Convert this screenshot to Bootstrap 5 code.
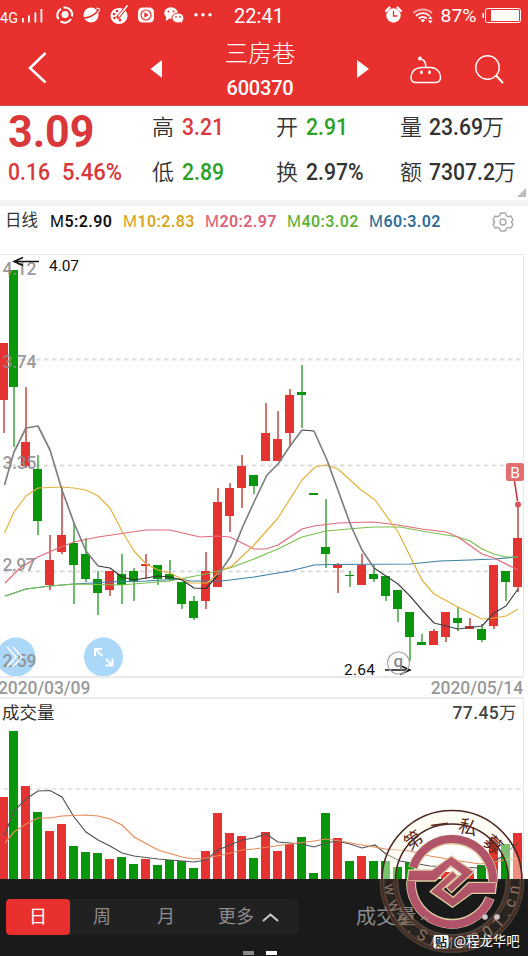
<!DOCTYPE html>
<html lang="zh-CN">
<head>
<meta charset="utf-8">
<meta name="viewport" content="width=device-width, initial-scale=1">
<title>三房巷 600370</title>
<link href="https://cdn.jsdelivr.net/npm/bootstrap@5.3.0/dist/css/bootstrap.min.css" rel="stylesheet">
<style>
body{font-family:Roboto,"Noto Sans CJK SC",sans-serif;line-height:1;background:#fff}
.phone{width:528px;height:956px}
svg{display:block;flex:none}
.brand-bg{background:#e8312f}
.status{height:31px}
.appbar{height:74px}
.title-box{width:100px;padding-top:10px}
.stock-name{font-size:23.5px;line-height:26px;font-weight:300}
.stock-code{font-size:20px;line-height:20px;font-weight:500;margin-top:11px;letter-spacing:-.2px}
.quote{height:95px;color:#333;border-top:1px solid #c9504c}
.q-main{width:152px;padding-left:8px}
.q-col{width:124px;margin-top:-1px}
.q-row{height:45px;font-size:22px;white-space:nowrap}
.q-row span{font-weight:350}
.num{font-weight:500!important;font-size:23px;display:inline-block;transform:scaleX(.92);transform-origin:0 50%}
.price{font-size:45px;font-weight:700;line-height:45px;height:44px;padding-top:3px;transform:scaleX(.955);transform-origin:0 50%}
.up{color:#d9383a}.down{color:#2da027}
.corner{right:2px;bottom:3px}
.strip{height:6px;background:#f3f3f3}
.legend{height:48px;padding-bottom:17px;font-size:16px;letter-spacing:.4px;font-weight:600}
.legend i{font-style:normal;font-weight:400}
.dates{height:23px;border-top:2px solid #eaeaea;border-bottom:2px solid #eaeaea;font-size:17.5px;color:#999;font-weight:500;width:524px;letter-spacing:-.1px;padding-top:2px}
.volhead{height:30px;width:524px;border-right:1px solid #e8e8e8;font-size:17.5px;color:#333}
.toolbar{height:77px;background:#1a1a1a;color:#8c8c8c;font-size:18px}
.seg{width:292px;height:36px;background:#212121;margin:20px 0 0 6px}
.seg div{width:64px}
.seg .seg-on{background:#e8312f;color:#fff}
.page-ind{height:4px;width:11px}
.stamp{left:378px;top:804px}
</style>
</head>
<body>
<div class="phone position-relative overflow-hidden">
  <div class="brand-bg text-white">
    <div class="status d-flex align-items-center">
      <svg width="215" height="31" fill="#fff" font-family="Roboto">
        <text x="0" y="22.500" font-size="15.500" textLength="18" lengthAdjust="spacingAndGlyphs">4G</text>
        <path d="M22 18h1.800v4.500H22zM28 15.500h1.800v7H28zM34.500 12.500h1.800v10h-1.800zM40.500 9h1.800v13.500h-1.800z"/>
        <g fill="none" stroke="#fff" stroke-width="2"><path d="M61 8.800a7.300 7.300 0 0 0-2.500 10.500M60.500 21.300a7.300 7.300 0 0 0 10.500-2.300M72 16.500a7.300 7.300 0 0 0-8.500-8.900"/></g><circle cx="65" cy="14.500" r="3.500"/>
        <circle cx="91" cy="15" r="7.500"/><path d="M83 17.500c4 1.500 12-2 16-8" fill="none" stroke="#e8312f" stroke-width="1.600"/><path d="M96 8l4 1-2 4" stroke="#fff" fill="none"/>
        <ellipse cx="119" cy="16" rx="8.500" ry="8"/><g fill="#e8312f"><circle cx="114" cy="14" r="1.300"/><circle cx="117" cy="11" r="1.300"/><circle cx="114.500" cy="18" r="1.300"/><circle cx="120" cy="20" r="1.400"/></g><path d="M127 6l-8 10-2 2" stroke="#e8312f" stroke-width="3.400"/><path d="M127.500 5.500l-9 11" stroke="#fff" stroke-width="1.600"/>
        <rect x="138" y="7.500" width="16" height="15" rx="4.500"/><circle cx="146" cy="15" r="5" fill="none" stroke="#e8312f" stroke-width="1.200"/><path d="M144.300 12.200v5.600l4.400-2.800z" fill="#e8312f"/>
        <ellipse cx="171" cy="13" rx="6.800" ry="5.700"/><path d="M166 17v4l4-3z"/><ellipse cx="178" cy="18" rx="6" ry="5" stroke="#e8312f"/><path d="M180 21l2 2.500v-4z"/><g fill="#e8312f"><circle cx="168.500" cy="11.500" r="1"/><circle cx="173.500" cy="11.500" r="1"/><circle cx="176" cy="16.800" r=".9"/><circle cx="180" cy="16.800" r=".9"/></g>
        <circle cx="196" cy="14.800" r="1.700"/><circle cx="203" cy="14.800" r="1.700"/><circle cx="210" cy="14.800" r="1.700"/>
      </svg>
      <svg width="313" height="31" viewBox="215 0 313 31" fill="#fff" font-family="Roboto">
        <text x="234" y="23" font-size="20" textLength="50">22:41</text>
        <circle cx="393.500" cy="15.500" r="7.200"/><path d="M386 11l3.500-3.500M401 11l-3.500-3.500" stroke="#fff" stroke-width="2.300" stroke-linecap="round"/><path d="M393.500 11v5h4" fill="none" stroke="#e8312f" stroke-width="1.300"/>
        <g fill="none" stroke="#fff" stroke-width="1.800"><path d="M413.500 13a14 14 0 0 1 18.500 0" opacity=".6"/><path d="M416 15.800a10 10 0 0 1 13.500 0"/><path d="M418.700 18.500a6 6 0 0 1 8 0"/></g><path d="M420.500 20l2.300 2.600 2.400-2.600a4 4 0 0 0-4.700 0zM428 19l2.300-3 2.300 3zM428 20.500l2.300 3 2.300-3z"/>
        <text x="440.500" y="22" font-size="18" textLength="36" lengthAdjust="spacingAndGlyphs">87%</text>
        <rect x="485.500" y="8.500" width="35" height="14" rx="2" fill="none" stroke="#fff"/><rect x="491" y="10" width="28" height="11"/><path d="M482.500 13h1.500v5h-1.500z"/>
      </svg>
    </div>
    <div class="appbar d-flex align-items-start">
      <svg width="210" height="74" viewBox="0 31 210 74"><path d="M45.500 53L30 68l15.500 14.500" fill="none" stroke="#fff" stroke-width="2.600"/><path d="M150.500 69l11.500-9v18z" fill="#fff"/></svg>
      <div class="title-box d-flex flex-column align-items-center">
        <div class="stock-name">三房巷</div>
        <div class="stock-code">600370</div>
      </div>
      <svg width="218" height="74" viewBox="310 31 218 74" fill="none" stroke="#fff" stroke-width="1.500"><path d="M357 60v18l12-9z" fill="#fff" stroke="none"/><path d="M421 67.500h9.500c7 .5 10 5 10 10 0 3.500-2 5-5.500 5h-19c-3.500 0-5-1.500-5-5 .3-5 3-9.500 10-10zM425.800 67c0-4-1-6.500-3.500-7.500"/><circle cx="420" cy="58.600" r="2" fill="#fff" stroke="none"/><ellipse cx="421.500" cy="72.300" rx="1.300" ry="2" fill="#fff" stroke="none"/><ellipse cx="429.500" cy="72.300" rx="1.300" ry="2" fill="#fff" stroke="none"/><circle cx="487.500" cy="67.500" r="11.700"/><path d="M496 75.500l7 7.500" stroke-width="1.900"/></svg>
    </div>
  </div>

  <div class="quote d-flex position-relative">
    <div class="q-main up">
      <div class="price">3.09</div>
      <div class="q-row d-flex align-items-center"><span class="num" style="width:54px">0.16</span><span class="num" style="transform:scaleX(.96)">5.46%</span></div>
    </div>
    <div class="q-col"><div class="q-row d-flex align-items-center gap-2"><span>高</span><span class="num up">3.21</span></div><div class="q-row d-flex align-items-center gap-2"><span>低</span><span class="num down">2.89</span></div></div>
    <div class="q-col"><div class="q-row d-flex align-items-center gap-2"><span>开</span><span class="num down">2.91</span></div><div class="q-row d-flex align-items-center gap-2"><span>换</span><span class="num">2.97%</span></div></div>
    <div class="q-col"><div class="q-row d-flex align-items-center"><span style="width:29px">量</span><span class="num" style="width:53px">23.69</span><span>万</span></div><div class="q-row d-flex align-items-center"><span style="width:29px">额</span><span class="num" style="width:65px">7307.2</span><span>万</span></div></div>
    <svg class="position-absolute corner" width="9" height="9"><path d="M9 0v9H0z" fill="#bbb"/></svg>
  </div>
  <div class="strip"></div>
  <div class="legend d-flex align-items-center">
    <div style="width:45px;margin-left:5px;font-weight:400;font-size:16.500px;letter-spacing:0;color:#333">日线</div>
    <div style="width:73px;color:#111"><i>M</i>5:2.90</div>
    <div style="width:82px;color:#d9a520"><i>M</i>10:2.83</div>
    <div style="width:82px;color:#db6078"><i>M</i>20:2.97</div>
    <div style="width:82px;color:#62b23a"><i>M</i>40:3.02</div>
    <div style="width:123px;color:#2c6e98"><i>M</i>60:3.02</div>
    <svg width="22" height="22" viewBox="-11 -11 22 22" fill="none" stroke="#aaa" stroke-width="1.400" stroke-linejoin="round"><path d="M-2.500-9h5l.8 2.600 2 1.100 2.700-.7 2 4-1.700 2 0 0 1.700 2.200-2 3.800-2.700-.6-2 1.100-.8 2.500h-5l-.8-2.500-2-1.100-2.700.6-2-3.800 1.700-2.200-1.700-2 2-4 2.700.7 2-1.100z"/><circle r="3"/></svg>
  </div>

  <svg id="kline" width="528" height="422" viewBox="0 254 528 422" font-family="Roboto">
    <path d="M0 254.500h523.500v422" fill="none" stroke="#e8e8e8"/>
    <path d="M0 359.500h523M0 465.500h523M0 571.500h523" stroke="#dcdcdc" stroke-width="2" stroke-dasharray="4.500 3.500" stroke-dashoffset="4"/>
    <g id="candles"></g>
    <g id="averages" fill="none" stroke-width="1.200" stroke-linejoin="round"></g>
    <g fill="#a5d4f8" fill-opacity=".93"><circle cx="16" cy="657" r="19.500"/><circle cx="103.500" cy="657" r="19.500"/></g>
    <g fill="#8c8c8c" fill-opacity=".88" font-size="17.500" font-weight="500"><text x="2.500" y="275" textLength="34">4.12</text><text x="2.500" y="368" textLength="34">3.74</text><text x="2.500" y="468.500" textLength="34">3.35</text><text x="2.500" y="570.500" textLength="33">2.97</text><text x="2.500" y="667" textLength="34">2.59</text></g>
    <g fill="none" stroke="#fff" stroke-width="1.500"><path d="M7 647l9 10-9 10M13 647l9 10-9 10"/><path d="M95 656v-7h7M95 649l7.500 7M106 659l6.500 6.500M112.500 658.500v7h-7" stroke-width="1.900"/></g>
    <g fill="none" stroke="#111" stroke-width="1.500"><path d="M39 261.500H15M23 257.500l-9 4 9 4"/><path d="M385 670h24M400 665.500l10 4.500-10 4.500"/></g>
    <g fill="#111" font-size="15.500"><text x="49" y="271" textLength="30">4.07</text><text x="344" y="674.500" textLength="31">2.64</text></g>
    <circle cx="398.500" cy="663" r="11" fill="none" stroke="#aaa" stroke-width="1.200"/><text x="393.500" y="667" font-size="17" font-weight="500" fill="#888">q</text>
    <path d="M514.500 481l3 20" stroke="#c93438" stroke-width="1.600"/><circle cx="518" cy="504.500" r="3" fill="#dc5357"/>
    <rect x="506" y="463" width="18" height="18" rx="2.500" fill="#e56c6f"/><text x="510.200" y="477.500" font-size="15.500" fill="#fff">B</text>
  </svg>
  <div class="dates d-flex justify-content-between align-items-center"><span style="margin-left:-2px">2020/03/09</span><span style="margin-right:1px">2020/05/14</span></div>
  <div class="volhead d-flex justify-content-between align-items-center"><span style="margin-left:2px">成交量</span><span style="margin-right:6px;color:#444;font-weight:500;letter-spacing:.4px">77.45<span style="font-weight:400">万</span></span></div>
  <svg id="volume" width="528" height="150" viewBox="0 729 528 150">
    <path d="M523.500 729v150" stroke="#e8e8e8"/>
    <path d="M0 789h523" stroke="#dcdcdc" stroke-width="1.600" stroke-dasharray="4.500 3.500" stroke-dashoffset="4"/>
    <g id="volbars"></g>
    <g id="volavg" fill="none" stroke-width="1.200"></g>
  </svg>

  <div class="toolbar d-flex position-relative">
    <div class="seg d-flex rounded-1 overflow-hidden">
      <div class="seg-on rounded-1 d-flex align-items-center justify-content-center">日</div>
      <div class="d-flex align-items-center justify-content-center">周</div>
      <div class="d-flex align-items-center justify-content-center">月</div>
      <div class="d-flex align-items-center" style="width:100px;padding-left:20px">更多<svg class="ms-2" width="17" height="9"><path d="M1 8l7.500-6.500L16 8" fill="none" stroke="#ccc" stroke-width="2"/></svg></div>
    </div>
    <div class="d-flex align-items-center" style="height:36px;margin:20px 0 0 58px;font-size:20px">成交量</div>
    <div class="position-absolute d-flex gap-2" style="left:243px;top:72px"><div class="page-ind" style="background:#888"></div><div class="page-ind bg-white ms-1"></div></div>
  </div>

  <svg class="position-absolute stamp" width="150" height="152" viewBox="378 804 150 152" font-family="'Noto Sans CJK SC',Roboto,sans-serif">
    <defs>
      <clipPath id="upper"><rect x="370" y="800" width="160" height="79"/></clipPath>
      <clipPath id="lower"><rect x="370" y="879" width="160" height="77"/></clipPath>
      <path id="arcBottom" d="M384.500 880.500a67.500 67.500 0 0 0 135 0"/>
      <linearGradient id="rose" x2="0" y2="1"><stop stop-color="#bd5b70"/><stop offset="1" stop-color="#a84d60"/></linearGradient>
    </defs>
    <g clip-path="url(#upper)" fill="none"><circle cx="452" cy="880.500" r="63" stroke="#fffae6" stroke-width="14" stroke-opacity=".45"/></g>
    <g clip-path="url(#lower)" fill="none"><circle cx="452" cy="880.500" r="63" stroke="#40352a" stroke-width="14" stroke-opacity=".4"/><circle cx="452" cy="880.500" r="70" stroke="#85735a" stroke-width="5" stroke-opacity=".4"/><circle cx="452" cy="880.500" r="56" stroke="#85735a" stroke-width="5" stroke-opacity=".45"/></g>
    <g fill="none" stroke="#4b2520" stroke-width="1.600"><circle cx="452" cy="880.500" r="70"/><circle cx="452" cy="880.500" r="56.500"/></g>
    <g fill="none" stroke="#ddcba2" stroke-width="10"><path d="M413 868A41 41 0 0 1 493 881.500M411 881.500A41 41 0 0 0 490 898"/></g>
    <g transform="translate(368 800) scale(.33333)" fill="url(#rose)" stroke="#ddcba2" stroke-width="4" stroke-linejoin="round"><path d="M122 210H192L250 168 318 215 250 278 235 262 280 222 248 198 202 243H118z"/><path d="M382 280H312L254 322 186 275 254 212 269 228 224 268 256 292 302 247H386z"/></g>
    <g fill="none" stroke="#b1546a" stroke-width="8"><path d="M413 867.500A41 41 0 0 1 493 882M411 881A41 41 0 0 0 490 898.500"/></g>
    <g fill="#5b2b1d" font-size="18.500" text-anchor="middle" font-weight="400"><text transform="translate(413.500 840) rotate(-36)" y="6.500">第</text><text transform="translate(439.500 825) rotate(-8)" y="6.500">一</text><text transform="translate(468 827.500) rotate(14)" y="6.500">私</text><text transform="translate(493 844.500) rotate(42)" y="6.500">募</text></g>
    <text font-size="15.500" fill="#8f7466" font-family="Roboto" font-weight="400"><textPath href="#arcBottom" startOffset="4" textLength="202">www.SiMu001.cn</textPath></text>
    <circle cx="485" cy="917" r="2.800" fill="#cfc8c8"/><circle cx="497" cy="917" r="2.800" fill="#cfc8c8"/><path d="M421 920l3.500-3 3.500 3" stroke="#aaa" fill="none"/>
    <rect x="433.500" y="935" width="15" height="13.500" rx="2" fill="#fff"/><text x="435" y="946.500" font-size="12" font-weight="700" fill="#222">贴</text>
    <text x="453.500" y="946" font-size="13.500" fill="#fff" textLength="66" lengthAdjust="spacingAndGlyphs">@程龙华吧</text>
  </svg>
</div>
<script>
const RED = '#e43331', GREEN = '#0a960c';
// kind, high, body top, body bottom, low, top of the volume bar
const days = [
['r',343,343,400,433,797],['g',270,270,387,447,731],['r',387,442,466,468,786],['g',455,469,521,535,812],
['r',535,560,585,590,831],['r',488,535,552,554,824],['g',522,543,565,604,846],['g',538,554,579,582,852],
['g',571,579,593,615,853],['r',571,571,590,596,859],['g',554,574,585,604,857],['g',568,571,582,601,864],
['r',554,564,566,579,859],['g',565,565,579,585,865],['g',560,574,579,581,860],['g',582,582,604,609,861],
['g',596,601,618,620,868],['r',552,571,601,609,851],['r',488,502,587,587,813],['r',483,488,516,532,833],
['r',455,466,488,508,836],['g',475,475,486,494,858],['r',403,433,461,461,832],['r',411,439,461,461,851],
['r',389,395,433,447,844],['g',365,392,395,428,837],['g',493,493,495,495,873],['g',499,547,554,568,813],
['r',563,565,568,593,838],['g',571,575,576,587,861],['r',554,565,585,585,856],['g',565,574,579,582,861],
['g',576,576,596,601,861],['g',590,590,609,622,867],['g',612,612,637,661,862],['g',634,642,645,645,877],
['r',629,631,645,645,877],['r',612,612,637,642,872],['g',607,618,623,631,875],['r',618,626,629,629,870],
['g',624,629,640,642,865],['r',565,565,626,629,837],['g',571,571,582,601,844],['r',504,538,587,592,833]];
let candles = '', bars = '';
days.forEach(([k, hi, top, bot, lo, vol], i) => {
  const c = k === 'r' ? RED : GREEN, wick = k === 'r' ? '#c4524c' : '#4aa94a';
  const left = i ? 12 * i - 3 : -1, mid = i ? left + 5 : 4;
  candles += `<path d="M${mid} ${hi}V${lo}" stroke="${wick}" stroke-width="1.6"/><rect x="${left}" y="${top}" width="9" height="${bot - top}" fill="${c}"/>`;
  bars += `<rect x="${left}" y="${vol}" width="9" height="${879 - vol}" fill="${c}"/>`;
});
document.getElementById('candles').innerHTML = candles;
document.getElementById('volbars').innerHTML = bars;
const line = (pts, color, w) => `<polyline points="${pts}" stroke="${color}" ${w ? `stroke-width="${w}"` : ''}/>`;
document.getElementById('averages').innerHTML =
line('5,596 26,589 50,586 74,584 110,582 146,581 182,579 190,581 222,581 254,577 290,571 314,565 330,564.5 410,564 440,561 470,560 494,559 518,557','#3b7fa6') +
line('5,596 26,589 50,586 74,584 120,585 146,583 170,581 190,577 206,574 230,568 254,559 278,549 302,537 326,531 360,528 374,527 400,527 422,531 458,537 470,541 482,549 494,554 506,557 518,557','#7cc04e') +
line('5,583 20,568 38,557 56,549 74,542 98,537 146,530 170,530 200,537 218,536 230,537 254,549 266,549 278,545 302,529 314,526 338,523 374,522 398,525 422,529 446,532 458,537 482,554 494,558 518,570','#e2697c') +
line('4.5,533 14,512 26,496 38,488 62,487 74,488 86,490 98,496 110,508 122,531 134,551 146,564 158,570 170,573 182,579 190,583 207,583 222,570 232,566 254,545 278,518 302,480 315,467 326,465 338,469 360,489 375,500 398,532 422,580 434,594 458,607 482,619 494,618 506,616 518,609','#e3b23c') +
line('4.5,485 14,452 26,428 38,426 50,450 62,490 74,523 86,551 98,566','#808080',1.7) +
line('98,566 110,568 122,577 134,580 146,578 158,576 170,577 182,580 194,588 206,588.5 218,575','#333') +
line('218,575 231,556 243,526 255,500 267,475 278,464 290,446 302,430','#808080',1.7) +
line('302,430 314,431','#333') +
line('314,431 327,460 339,493 351,526 362,550 374,568','#808080',1.7) +
line('374,568 386,576 398,584 410,596 422,610 434,623 446,626 458,629 482,626 494,613 506,606 518,589','#444');
document.getElementById('volavg').innerHTML =
line('4.5,835 14,811 26,799 38,791 50,790.5 62,797 74,817 86,832 98,840 110,846 122,853 134,856 158,859 182,861 194,862 206,860 218,850 242,840 254,838 266,834 278,842 290,843 302,844 314,847 326,843 337,841 350,844 362,848 375,845 386,854 400,861 430,866 480,868 500,858 518,843','#555') +
line('5,843 14,832 26,824 38,818 50,818 62,816 86,815 98,816 110,819 122,825 134,837 158,850 182,857 194,859 206,858 222,855 242,850 254,849 290,844 314,841 326,839 340,841 362,845 386,849 410,851 430,856 460,861 480,864 518,858','#e68a58');
</script>
<script src="https://cdn.jsdelivr.net/npm/bootstrap@5.3.0/dist/js/bootstrap.bundle.min.js"></script>
</body>
</html>
